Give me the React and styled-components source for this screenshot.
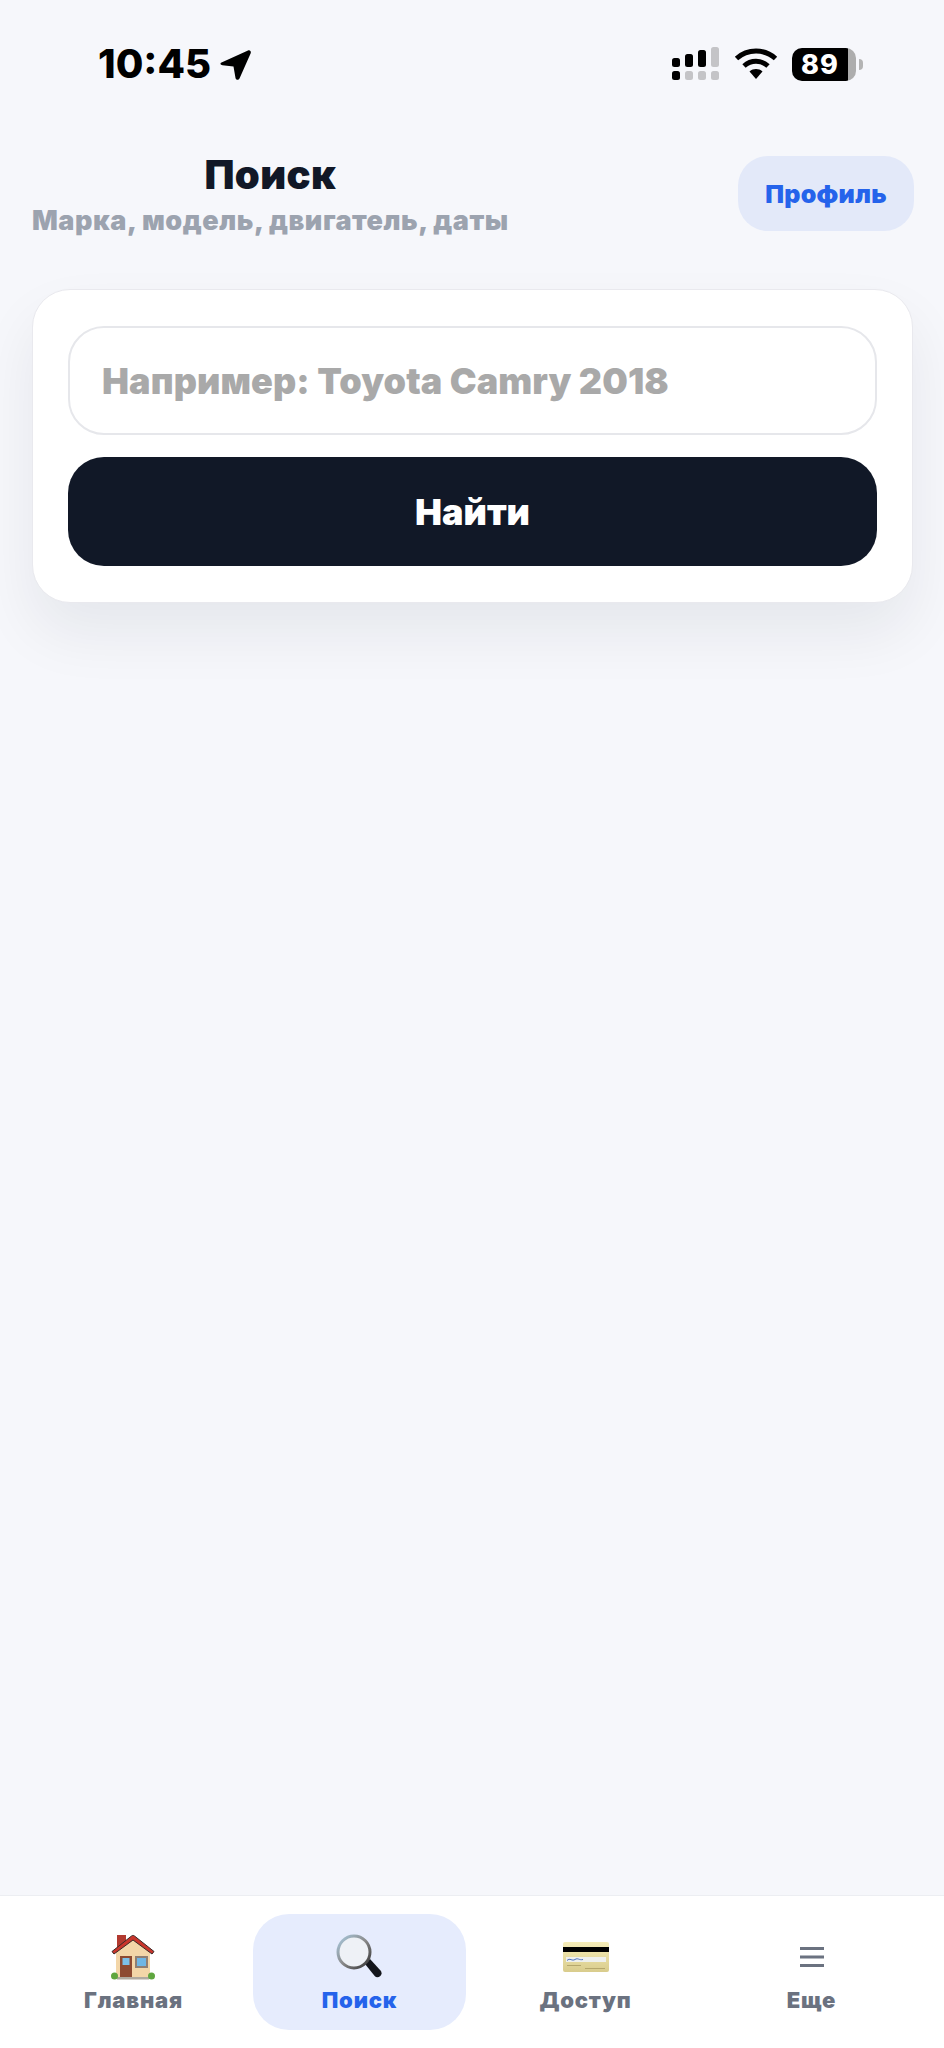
import React from "react";
import styled, { createGlobalStyle } from "styled-components";

const Global = createGlobalStyle`
  html, body { margin: 0; padding: 0; background: #f6f7fb; }
  * { box-sizing: border-box; }
  input::placeholder { color: #a9a9a9; opacity: 1; }
`;

const Page = styled.div`
  width: 944px;
  height: 2048px;
  display: flex;
  flex-direction: column;
  background: #f6f7fb;
  font-family: Inter, "Noto Sans", sans-serif;
  overflow: hidden;
`;

const StatusBar = styled.div`
  height: 127px;
  padding: 41px 88px 0 98px;
  display: flex;
  justify-content: space-between;
  align-items: flex-start;
  flex: none;
`;
const TimeGroup = styled.div`
  display: flex;
  align-items: center;
  gap: 8px;
  height: 46px;
`;
const Time = styled.span`
  font-size: 40px;
  font-weight: 800;
  color: #000;
  line-height: 46px;
`;
const StatusIcons = styled.div`
  display: flex;
  align-items: center;
  gap: 14px;
  height: 46px;
`;
const Battery = styled.div`
  position: relative;
  width: 64px;
  height: 33px;
  border-radius: 10px;
  background: linear-gradient(90deg, #000 0 88%, #adadad 88% 100%);
  color: #fff;
  font-size: 27px;
  font-weight: 800;
  line-height: 33px;
  padding-left: 9px;
  letter-spacing: 1px;
  &::after {
    content: "";
    position: absolute;
    right: -7px;
    top: 11px;
    width: 4px;
    height: 11px;
    border-radius: 0 4px 4px 0;
    background: #b4b4b4;
  }
`;

const Header = styled.div`
  padding: 0 30px 0 32px;
  height: 162px;
  display: flex;
  justify-content: space-between;
  align-items: flex-start;
  flex: none;
`;
const Titles = styled.div`
  display: flex;
  flex-direction: column;
  align-items: center;
  padding-top: 24px;
`;
const Title = styled.div`
  font-size: 40px;
  font-weight: 900;
  line-height: 48px;
  letter-spacing: 0.4px;
  color: #111827;
`;
const Subtitle = styled.div`
  font-size: 27px;
  font-weight: 900;
  line-height: 32px;
  margin-top: 6px;
  letter-spacing: 0.55px;
  color: #9ca3af;
`;
const ProfileButton = styled.button`
  width: 176px;
  height: 75px;
  margin-top: 29px;
  border: 0;
  border-radius: 30px;
  background: #e3e9f9;
  color: #2563eb;
  font: 900 25px Inter, sans-serif;
  letter-spacing: 0.3px;
`;

const Card = styled.div`
  margin: 0 31px 0 32px;
  height: 314px;
  padding: 36px 35px;
  display: flex;
  flex-direction: column;
  gap: 22px;
  flex: none;
  background: #fff;
  border: 1px solid #e9e9ee;
  border-radius: 38px;
  box-shadow: 0 30px 60px rgba(17, 24, 39, 0.07);
`;
const SearchInput = styled.input`
  height: 109px;
  width: 100%;
  border: 2px solid #e6e7eb;
  border-radius: 36px;
  padding: 2px 32px 0;
  outline: none;
  background: #fff;
  font: 900 36px Inter, sans-serif;
  letter-spacing: 0.1px;
  color: #111827;
`;
const SearchButton = styled.button`
  height: 110px;
  width: 100%;
  border: 0;
  border-radius: 36px;
  padding: 2px 0 0;
  background: #111827;
  color: #fff;
  font: 900 36px Inter, sans-serif;
`;

const Spacer = styled.div`
  flex: 1;
`;

const TabBar = styled.nav`
  height: 153px;
  flex: none;
  padding: 18px 27px 0;
  display: grid;
  grid-template-columns: repeat(4, 213px);
  gap: 13px;
  align-content: start;
  background: #fff;
  border-top: 1px solid #eceef2;
`;
const Tab = styled.div`
  height: 116px;
  border-radius: 36px;
  background: ${(p) => (p.$active ? "#e6ecfd" : "transparent")};
  color: ${(p) => (p.$active ? "#2563eb" : "#6b7280")};
  display: flex;
  flex-direction: column;
  align-items: center;
`;
const TabIcon = styled.div`
  height: 46px;
  margin-top: 20px;
  display: flex;
  align-items: center;
  justify-content: center;
`;
const TabLabel = styled.div`
  font-size: 22px;
  font-weight: 900;
  line-height: 26px;
  letter-spacing: 0.8px;
  margin-top: 7px;
`;

const LocationArrow = () => (
  <svg width="34" height="34" viewBox="0 0 34 34">
    <path d="M2.5 15.5 29 3.5c1.8-.8 3.5.9 2.7 2.7L20.5 31.5c-1 2-3.6 1.7-4-.5l-2-11.5-11-1.2c-2-.3-2.8-2-1-2.8z" fill="#000" />
  </svg>
);

const Signal = () => (
  <svg width="48" height="34" viewBox="0 0 48 34">
    <rect x="0" y="11" width="8" height="9" rx="2.5" fill="#000" />
    <rect x="13" y="7" width="8" height="13" rx="2.5" fill="#000" />
    <rect x="26" y="3" width="8" height="17" rx="2.5" fill="#000" />
    <rect x="39" y="0" width="8" height="20" rx="2.5" fill="#c4c4c7" />
    <rect x="0" y="24" width="8" height="9" rx="2.5" fill="#000" />
    <rect x="13" y="24" width="8" height="9" rx="2.5" fill="#c4c4c7" />
    <rect x="26" y="24" width="8" height="9" rx="2.5" fill="#c4c4c7" />
    <rect x="39" y="24" width="8" height="9" rx="2.5" fill="#c4c4c7" />
  </svg>
);

const Wifi = () => (
  <svg width="44" height="32" viewBox="0 0 44 32" fill="none">
    <path d="M2.5 10.5C13.5 .5 30.5 .5 41.5 10.5" stroke="#000" strokeWidth="5" />
    <path d="M10 18c7-6.2 17-6.2 24 0" stroke="#000" strokeWidth="5" />
    <path d="M15.5 23.5c4-3.2 9-3.2 13 0L22 31z" fill="#000" />
  </svg>
);

const House = () => (
  <svg width="44" height="46" viewBox="0 0 44 46" style={{ marginLeft: -2 }}>
    <rect x="6" y="1" width="9" height="14" fill="#b23a30" />
    <path d="M5 18 22 5l17 13v25H5z" fill="#f3d6a8" />
    <path d="M1 17.5 20.5 2c1-.8 2-.8 3 0L43 17.5l-2 2.5L22 6 3 20z" fill="#c9352b" stroke="#3a2a28" strokeWidth="1" />
    <rect x="9" y="22" width="12" height="21" fill="#8d4a32" />
    <rect x="11.5" y="24" width="7" height="7" fill="#7cc0e8" />
    <rect x="24" y="22" width="13" height="12" fill="#8f7f73" />
    <rect x="26" y="24" width="9" height="8" fill="#6fb6e4" />
    <rect x="6" y="43" width="32" height="2.5" fill="#b0aaa0" />
    <circle cx="3.5" cy="42" r="3.5" fill="#5fa63f" />
    <circle cx="40.5" cy="42" r="3.5" fill="#5fa63f" />
  </svg>
);

const Magnifier = () => (
  <svg width="48" height="46" viewBox="0 0 48 46" style={{ marginLeft: -3 }}>
    <defs>
      <linearGradient id="ring" x1="0" y1="0" x2="1" y2="1">
        <stop offset="0" stopColor="#a9c9de" />
        <stop offset="0.5" stopColor="#8a8a8a" />
        <stop offset="1" stopColor="#333" />
      </linearGradient>
    </defs>
    <path d="M31 30 36 25 46.5 36.5c1.6 1.8 1.3 4-.2 5.5-1.7 1.6-4 1.8-5.6 0z" fill="#14161c" />
    <circle cx="20" cy="18" r="16" fill="#eef1f6" stroke="url(#ring)" strokeWidth="3" />
  </svg>
);

const CreditCard = () => (
  <svg width="46" height="30" viewBox="0 0 46 30">
    <defs>
      <linearGradient id="gold" x1="0" y1="0" x2="0" y2="1">
        <stop offset="0" stopColor="#f5ecb8" />
        <stop offset="1" stopColor="#d9cc8c" />
      </linearGradient>
    </defs>
    <rect x="0" y="0" width="46" height="30" rx="2" fill="url(#gold)" />
    <rect x="0" y="5" width="46" height="5" fill="#000" />
    <rect x="3" y="15" width="40" height="5" fill="#eef0ee" />
    <path d="M4 18.5c3-3 5 1 8-1s4 1 8 0" stroke="#4a6fc0" strokeWidth="1" fill="none" />
    <rect x="4" y="23" width="14" height="1" fill="#b5a76c" />
    <rect x="22" y="26" width="20" height="1" fill="#b5a76c" />
  </svg>
);

const Burger = () => (
  <svg width="24" height="22" viewBox="0 0 24 22">
    <rect x="0" y="1" width="24" height="3" fill="#6b7280" />
    <rect x="0" y="9.5" width="24" height="3" fill="#6b7280" />
    <rect x="0" y="18" width="24" height="3" fill="#6b7280" />
  </svg>
);

const tabs = [
  { label: "Главная", icon: <House /> },
  { label: "Поиск", icon: <Magnifier />, active: true },
  { label: "Доступ", icon: <CreditCard /> },
  { label: "Еще", icon: <Burger /> },
];

export default function App() {
  return (
    <Page>
      <Global />
      <StatusBar>
        <TimeGroup>
          <Time>10:45</Time>
          <LocationArrow />
        </TimeGroup>
        <StatusIcons>
          <Signal />
          <Wifi />
          <Battery>89</Battery>
        </StatusIcons>
      </StatusBar>
      <Header>
        <Titles>
          <Title>Поиск</Title>
          <Subtitle>Марка, модель, двигатель, даты</Subtitle>
        </Titles>
        <ProfileButton>Профиль</ProfileButton>
      </Header>
      <Card>
        <SearchInput placeholder="Например: Toyota Camry 2018" />
        <SearchButton>Найти</SearchButton>
      </Card>
      <Spacer />
      <TabBar>
        {tabs.map((t) => (
          <Tab key={t.label} $active={t.active}>
            <TabIcon>{t.icon}</TabIcon>
            <TabLabel>{t.label}</TabLabel>
          </Tab>
        ))}
      </TabBar>
    </Page>
  );
}
